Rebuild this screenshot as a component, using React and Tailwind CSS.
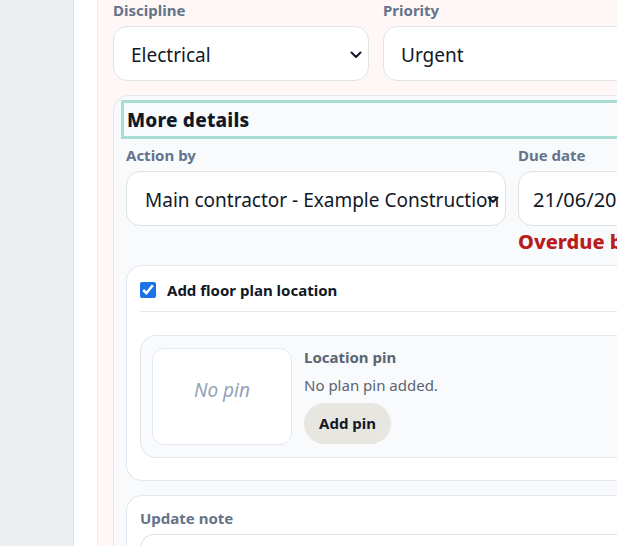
import React from "react";

const font = { fontFamily: '"Noto Sans", "Open Sans", sans-serif' };

function Chevron({ className }) {
  return (
    <svg className={className} width="12" height="8" viewBox="0 0 12 8" fill="none">
      <path d="M1.5 1.5 L6 6 L10.5 1.5" stroke="#111827" strokeWidth="2" strokeLinecap="round" strokeLinejoin="round" />
    </svg>
  );
}

function SelectBox({ value, width, chevron = true, pad = "pl-[17px]", size = "text-[19px]" }) {
  return (
    <div className={`relative h-[55px] ${width} shrink-0 rounded-[14px] border border-[#dfe3e8] bg-white`}>
      <div className={`flex h-full items-center overflow-hidden whitespace-nowrap ${pad} pr-[8px] pt-[3px] ${size} text-[#111827]`}>
        {value}
      </div>
      {chevron && <Chevron className="absolute right-[6px] top-[24px]" />}
    </div>
  );
}

export default function App() {
  return (
    <div className="flex h-[546px] w-[617px] overflow-hidden bg-white" style={font}>
      <div className="w-[74px] shrink-0 border-r border-[#dde3e7] bg-[#ebeff2]" />
      <div className="w-[23px] shrink-0 bg-white" />
      <div className="w-[900px] shrink-0 border-l border-[#fbe3e3] bg-[#fff6f6] pl-[15px]">
        <div className="flex gap-[14px]">
          <div className="flex flex-col">
            <div className="h-[20px] text-[15px] font-bold leading-[20px] text-[#64748b]">Discipline</div>
            <div className="mt-[6px]">
              <SelectBox value="Electrical" width="w-[256px]" />
            </div>
          </div>
          <div className="flex flex-col">
            <div className="h-[20px] text-[15px] font-bold leading-[20px] text-[#64748b]">Priority</div>
            <div className="mt-[6px]">
              <SelectBox value="Urgent" width="w-[400px]" chevron={false} />
            </div>
          </div>
        </div>

        <div className="mt-[14px] rounded-tl-[16px] border-l border-t border-[#e2e8f0] bg-[#f8fafc] pl-[12px] pt-[4px]">
          <div className="-ml-[5px] flex h-[39px] items-center border-[3px] border-[#a8ddd3] pl-[3px] pt-[1px] text-[19px] font-extrabold tracking-[0.2px] text-[#111827]">
            More details
          </div>

          <div className="mt-[6px] flex gap-[13px]">
            <div className="flex flex-col">
              <div className="h-[20px] text-[15px] font-bold leading-[20px] text-[#64748b]">Action by</div>
              <div className="mt-[6px]">
                <SelectBox value="Main contractor - Example Construction" width="w-[380px]" pad="pl-[18px]" />
              </div>
            </div>
            <div className="flex flex-col">
              <div className="-ml-[1px] h-[20px] text-[15px] font-bold leading-[20px] text-[#64748b]">Due date</div>
              <div className="mt-[6px] -ml-[1px]">
                <SelectBox value="21/06/2025" width="w-[260px]" chevron={false} pad="pl-[14px]" size="text-[20px]" />
              </div>
              <div className="mt-[3px] -ml-[1px] whitespace-nowrap text-[20px] font-extrabold leading-[26px] text-[#b91c1c]">Overdue by 3 days</div>
            </div>
          </div>

          <div className="mt-[10px] rounded-tl-[16px] rounded-bl-[16px] border-y border-l border-[#e2e8f0] bg-white pl-[13px] pt-[14px] pb-[22px]">
            <div className="flex items-center gap-[11px]">
              <input type="checkbox" defaultChecked className="h-[16px] w-[16px] accent-[#1a73e8]" />
              <span className="text-[15px] font-bold leading-[20px] text-[#111827]">Add floor plan location</span>
            </div>
            <div className="mt-[11px] border-t border-[#e5e7eb]" />
            <div className="mt-[23px] flex gap-[12px] rounded-tl-[16px] rounded-bl-[16px] border-y border-l border-[#e2e8f0] bg-[#f8fafc] py-[12px] pl-[11px]">
              <div className="flex h-[97px] w-[140px] items-center justify-center rounded-[12px] border border-[#e2e8f0] bg-white pb-[12px] text-[19px] italic text-[#94a3b8]">
                No pin
              </div>
              <div className="flex flex-col">
                <div className="-mt-[1px] text-[15px] font-bold leading-[20px] text-[#5b6472]">Location pin</div>
                <div className="mt-[8px] text-[15px] leading-[20px] text-[#5b6472]">No plan pin added.</div>
                <div className="mt-[8px] flex h-[41px] w-[87px] items-center justify-center rounded-full bg-[#e8e6e1] text-[15px] font-bold text-[#111827]">
                  Add pin
                </div>
              </div>
            </div>
          </div>

          <div className="mt-[14px] rounded-tl-[16px] border-l border-t border-[#e2e8f0] bg-white pl-[13px] pt-[12px]">
            <div className="text-[15px] font-bold leading-[20px] text-[#64748b]">Update note</div>
            <div className="mt-[6px] h-[60px] rounded-tl-[14px] border-l border-t border-[#dfe3e8] bg-white" />
          </div>
        </div>
      </div>
    </div>
  );
}
